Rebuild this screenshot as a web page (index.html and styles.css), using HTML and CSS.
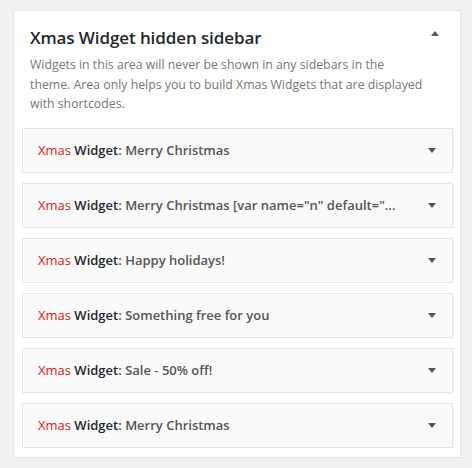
FILE: index.html
```html
<!DOCTYPE html>
<html>
<head>
<meta charset="utf-8">
<link rel="stylesheet" href="styles.css">
</head>
<body>
<div class="sidebar">
  <div class="sidebar-head">
    <h2 class="sidebar-title">Xmas Widget hidden sidebar</h2>
    <span class="arrow arrow-up"></span>
  </div>
  <p class="sidebar-desc">Widgets in this area will never be shown in any sidebars in the<br>theme. Area only helps you to build Xmas Widgets that are displayed<br>with shortcodes.</p>
  <div class="widgets">
    <div class="widget"><span class="w-title"><span class="brand">Xmas</span> <span class="wname">Widget</span>: Merry Christmas</span><span class="arrow arrow-down"></span></div>
    <div class="widget"><span class="w-title"><span class="brand">Xmas</span> <span class="wname">Widget</span>: Merry Christmas [var name="n" default="...</span><span class="arrow arrow-down"></span></div>
    <div class="widget"><span class="w-title"><span class="brand">Xmas</span> <span class="wname">Widget</span>: Happy holidays!</span><span class="arrow arrow-down"></span></div>
    <div class="widget"><span class="w-title"><span class="brand">Xmas</span> <span class="wname">Widget</span>: Something free for you</span><span class="arrow arrow-down"></span></div>
    <div class="widget"><span class="w-title"><span class="brand">Xmas</span> <span class="wname">Widget</span>: Sale - 50% off!</span><span class="arrow arrow-down"></span></div>
    <div class="widget"><span class="w-title"><span class="brand">Xmas</span> <span class="wname">Widget</span>: Merry Christmas</span><span class="arrow arrow-down"></span></div>
  </div>
</div>
</body>
</html>
```
FILE: styles.css
```css
html, body {
  margin: 0;
  padding: 0;
  background: #f1f1f1;
}
body {
  padding: 10px 0 0 13px;
  font-family: "Open Sans", "Noto Sans", sans-serif;
}
.sidebar {
  width: 448px;
  box-sizing: border-box;
  background: #fff;
  border: 1px solid #e5e5e5;
  box-shadow: 0 1px 1px rgba(0,0,0,0.04);
  padding: 0 7px 9px 8px;
}
.sidebar-head {
  display: flex;
  align-items: center;
  justify-content: space-between;
  padding: 12px 14px 0 8px;
  height: 28px;
}
.sidebar-title {
  margin: 0;
  font-size: 17px;
  font-weight: 600;
  color: #23282d;
  letter-spacing: -0.1px;
}
.arrow {
  width: 0;
  height: 0;
  border-left: 4px solid transparent;
  border-right: 4px solid transparent;
}
.arrow-up {
  border-bottom: 5px solid #555;
  margin-top: -8px;
}
.arrow-down {
  border-top: 5px solid #555;
}
.sidebar-desc {
  margin: 4px 0 14px 8px;
  white-space: nowrap;
  font-size: 12.3px;
  line-height: 19.5px;
  color: #72777c;
}
.widgets {
  display: flex;
  flex-direction: column;
  gap: 10px;
}
.widget {
  height: 45px;
  box-sizing: border-box;
  background: #fafafa;
  border: 1px solid #e5e5e5;
  display: flex;
  align-items: center;
  justify-content: space-between;
  padding: 0 16px 0 15px;
}
.w-title {
  font-size: 13px;
  font-weight: 600;
  color: #555;
}
.brand {
  color: #dd1717;
  font-weight: 400;
}
.wname {
  color: #23282d;
}
```
